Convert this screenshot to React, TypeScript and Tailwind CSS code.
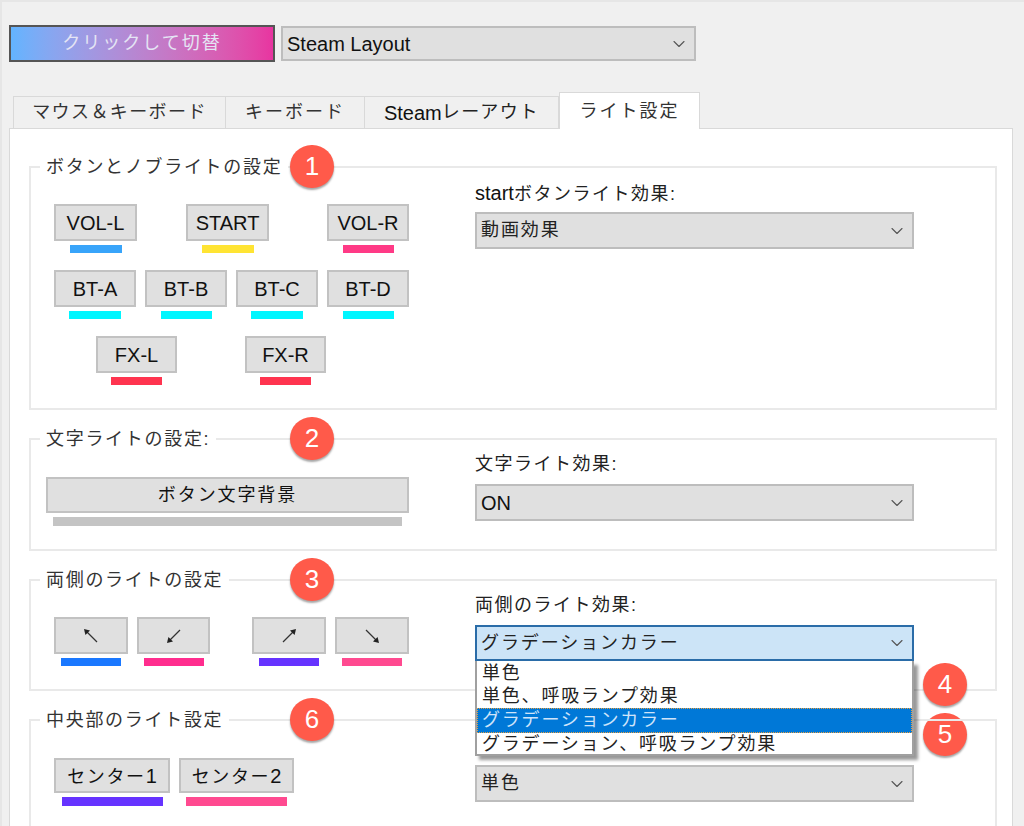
import { ChevronDown } from "lucide-react";
import type { ReactNode } from "react";

const font = "font-['Liberation_Sans','Noto_Sans_CJK_JP',sans-serif]";

function Latin({ children }: { children: ReactNode }) {
    return <span className="text-[20px] tracking-normal text-[#111]">{children}</span>;
}

function Badge({ n, className }: { n: number; className: string }) {
    return (
        <div
            className={`absolute flex h-[43px] w-[44px] items-center justify-center rounded-full bg-[#ff5a4a] text-[26px] text-white shadow-[0_2px_2px_rgba(0,0,0,0.35)] ${className}`}
        >
            {n}
        </div>
    );
}

function Select({
    value,
    className,
    active,
}: {
    value: ReactNode;
    className: string;
    active?: boolean;
}) {
    return (
        <div
            className={`flex items-center justify-between border-2 pl-[4px] pr-[5px] text-[18px] ${
                active ? "border-[#2a6ca8] bg-[#cce4f7] text-[#222]" : "border-[#bdbdbd] bg-[#e0e0e0] text-[#222]"
            } ${className}`}
        >
            <span className="tracking-[1.9px]">{value}</span>
            <ChevronDown size={20} strokeWidth={1.3} className="text-[#555]" />
        </div>
    );
}

function LightButton({
    label,
    width,
    barWidth,
    barColor,
    height = "h-[37px]",
    barHeight = "h-[8px]",
}: {
    label: ReactNode;
    width: string;
    barWidth: string;
    barColor: string;
    height?: string;
    barHeight?: string;
}) {
    return (
        <div className={`flex shrink-0 flex-col items-center gap-[4px] ${width}`}>
            <div
                className={`flex w-full items-center justify-center border-2 border-[#c2c2c2] bg-[#e0e0e0] text-[20px] text-[#111] ${height}`}
            >
                {label}
            </div>
            <div className={`${barWidth} ${barHeight} ${barColor}`} />
        </div>
    );
}

function Arrow({ rotate }: { rotate: string }) {
    return (
        <svg width="18" height="18" viewBox="0 0 18 18" className={rotate}>
            <path d="M3.5 3.5 L15 15" stroke="#333" strokeWidth="1.3" />
            <path d="M2 2 L8 3.4 L3.4 8 Z" fill="#222" />
        </svg>
    );
}

function Group({
    title,
    height,
    badge,
    children,
    right,
    bodyTop,
}: {
    title: string;
    height: string;
    badge: number;
    children: ReactNode;
    right: ReactNode;
    bodyTop: string;
}) {
    return (
        <div className={`relative flex w-[968px] shrink-0 border-2 border-[#e9e9e9] ${height}`}>
            <div className="absolute left-[9px] top-[-14px] bg-white px-[6px] text-[18px] leading-[26px] tracking-[1.7px] text-[#333]">
                {title}
            </div>
            <Badge n={badge} className="left-[259px] top-[-23px]" />
            <div className={`w-[444px] shrink-0 pl-[15px] ${bodyTop}`}>{children}</div>
            {right}
        </div>
    );
}

function Right({
    label,
    top,
    gap,
    children,
}: {
    label: ReactNode;
    top: string;
    gap: string;
    children: ReactNode;
}) {
    return (
        <div className={`relative w-[439px] ${top}`}>
            <div className={`text-[18px] leading-[26px] tracking-[1.5px] text-[#222] ${gap}`}>{label}</div>
            {children}
        </div>
    );
}

export default function App() {
    return (
        <div className={`h-[826px] overflow-hidden border-l-2 border-t-2 border-[#e6e6e6] bg-[#f0f0f0] ${font}`}>
            <div className="flex items-center gap-[6px] pl-[7px] pt-[23px]">
                <div className="flex h-[37px] w-[266px] items-center justify-center border-2 border-[#555] bg-gradient-to-r from-[#62b4ff] to-[#e834a0] text-[18px] tracking-[2px] text-[#e4e4f4]">
                    クリックして切替
                </div>
                <Select value={<Latin>Steam Layout</Latin>} className="h-[35px] w-[415px]" />
            </div>

            <div className="mt-[30px] flex h-[36px] items-end pl-[11px]">
                <div className="flex h-[32px] w-[213px] items-center justify-center border border-b-0 border-[#d9d9d9] text-[18px] tracking-[1.4px] text-[#333]">
                    マウス＆キーボード
                </div>
                <div className="flex h-[32px] w-[139px] items-center justify-center border border-b-0 border-l-0 border-[#d9d9d9] text-[18px] tracking-[2px] text-[#333]">
                    キーボード
                </div>
                <div className="flex h-[32px] w-[194px] items-center justify-center border border-b-0 border-l-0 border-[#d9d9d9] text-[18px] tracking-[1.6px] text-[#222]">
                    <Latin>Steam</Latin>レーアウト
                </div>
                <div className="relative z-10 mb-[-1px] flex h-[37px] w-[141px] items-center justify-center border border-b-0 border-[#d9d9d9] bg-white text-[18px] tracking-[2px] text-[#333]">
                    ライト設定
                </div>
            </div>

            <div className="ml-[7px] flex h-[720px] w-[1004px] flex-col gap-[28px] border border-[#d9d9d9] bg-white pl-[19px] pt-[37px]">
                <Group
                    title="ボタンとノブライトの設定"
                    height="h-[244px]"
                    badge={1}
                    bodyTop="pt-[36px]"
                    right={
                        <Right label={<><Latin>start</Latin>ボタンライト効果:</>} top="pt-[12px]" gap="mb-[5px]">
                            <Select value="動画効果" className="h-[37px] w-[439px]" />
                        </Right>
                    }
                >
                    <div className="flex flex-col gap-[17px] pl-[8px]">
                        <div className="flex gap-[49px]">
                            <LightButton label="VOL-L" width="w-[83px]" barWidth="w-[52px]" barColor="bg-[#38a4fa]" />
                            <div className="flex gap-[58px]">
                                <LightButton label="START" width="w-[83px]" barWidth="w-[52px]" barColor="bg-[#ffe433]" />
                                <LightButton label="VOL-R" width="w-[82px]" barWidth="w-[51px]" barColor="bg-[#ff3a86]" />
                            </div>
                        </div>
                        <div className="flex gap-[9px]">
                            <LightButton label="BT-A" width="w-[82px]" barWidth="w-[52px]" barColor="bg-[#00f6ff]" />
                            <LightButton label="BT-B" width="w-[82px]" barWidth="w-[51px]" barColor="bg-[#00f6ff]" />
                            <LightButton label="BT-C" width="w-[82px]" barWidth="w-[52px]" barColor="bg-[#00f6ff]" />
                            <LightButton label="BT-D" width="w-[82px]" barWidth="w-[51px]" barColor="bg-[#00f6ff]" />
                        </div>
                        <div className="flex gap-[68px] pl-[42px]">
                            <LightButton label="FX-L" width="w-[81px]" barWidth="w-[51px]" barColor="bg-[#ff344f]" />
                            <LightButton label="FX-R" width="w-[81px]" barWidth="w-[51px]" barColor="bg-[#ff344f]" />
                        </div>
                    </div>
                </Group>

                <Group
                    title="文字ライトの設定:"
                    height="h-[113px]"
                    badge={2}
                    bodyTop="pt-[37px]"
                    right={
                        <Right label="文字ライト効果:" top="pt-[11px]" gap="mb-[7px]">
                            <Select value={<Latin>ON</Latin>} className="h-[37px] w-[439px]" />
                        </Right>
                    }
                >
                    <LightButton
                        label={<span className="text-[18px] tracking-[1.9px]">ボタン文字背景</span>}
                        width="w-[363px]"
                        barWidth="w-[349px]"
                        barColor="bg-[#c4c4c4]"
                        height="h-[36px]"
                        barHeight="h-[9px]"
                    />
                </Group>

                <Group
                    title="両側のライトの設定"
                    height="h-[112px]"
                    badge={3}
                    bodyTop="pt-[36px]"
                    right={
                        <Right label="両側のライト効果:" top="pt-[11px]" gap="mb-[7px]">
                            <Select value="グラデーションカラー" className="h-[36px] w-[439px]" active />
                            <div className="absolute left-0 top-[80px] z-20 flex h-[95px] w-[439px] flex-col border-2 border-t-0 border-[#a0a0a0] bg-white py-[1px] text-[18px] leading-[23px] tracking-[1.8px] text-[#222] shadow-[4px_4px_3px_rgba(0,0,0,0.4)]">
                                <div className="pl-[5px]">単色</div>
                                <div className="pl-[5px]">単色、呼吸ランプ効果</div>
                                <div className="border border-dotted border-[#e8a040] bg-[#0078d7] pl-[4px] text-[#cfe4fa]">
                                    グラデーションカラー
                                </div>
                                <div className="pl-[5px]">グラデーション、呼吸ランプ効果</div>
                            </div>
                            <Badge n={4} className="left-[448px] top-[82px]" />
                            <Badge n={5} className="left-[448px] top-[132px]" />
                        </Right>
                    }
                >
                    <div className="flex gap-[42px] pl-[8px]">
                        <div className="flex gap-[9px]">
                            <LightButton label={<Arrow rotate="" />} width="w-[74px]" barWidth="w-[60px]" barColor="bg-[#1a78ff]" />
                            <LightButton label={<Arrow rotate="-rotate-90" />} width="w-[73px]" barWidth="w-[60px]" barColor="bg-[#ff2d8e]" />
                        </div>
                        <div className="flex gap-[9px]">
                            <LightButton label={<Arrow rotate="rotate-90" />} width="w-[74px]" barWidth="w-[60px]" barColor="bg-[#6633ff]" />
                            <LightButton label={<Arrow rotate="rotate-180" />} width="w-[74px]" barWidth="w-[60px]" barColor="bg-[#ff4a90]" />
                        </div>
                    </div>
                </Group>

                <Group
                    title="中央部のライト設定"
                    height="h-[140px]"
                    badge={6}
                    bodyTop="pt-[37px]"
                    right={
                        <Right label={"\u00a0"} top="pt-[11px]" gap="mb-[7px]">
                            <Select value="単色" className="h-[37px] w-[439px]" />
                        </Right>
                    }
                >
                    <div className="flex gap-[9px] pl-[8px]">
                        <LightButton
                            label={<span className="text-[18px] tracking-[1.6px]">センター<Latin>1</Latin></span>}
                            width="w-[116px]"
                            barWidth="w-[101px]"
                            barColor="bg-[#6633ff]"
                            height="h-[35px]"
                            barHeight="h-[9px]"
                        />
                        <LightButton
                            label={<span className="text-[18px] tracking-[1.6px]">センター<Latin>2</Latin></span>}
                            width="w-[115px]"
                            barWidth="w-[101px]"
                            barColor="bg-[#ff4a90]"
                            height="h-[35px]"
                            barHeight="h-[9px]"
                        />
                    </div>
                </Group>
            </div>
        </div>
    );
}
